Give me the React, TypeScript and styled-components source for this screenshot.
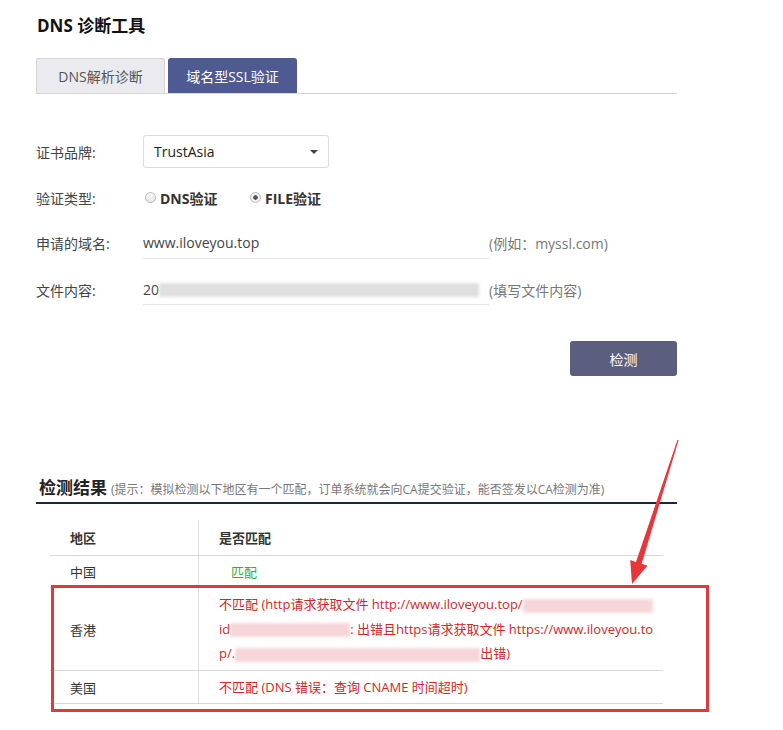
import styled, { createGlobalStyle } from 'styled-components'

const GlobalStyle = createGlobalStyle`
  html, body {
    margin: 0;
    background: #fff;
  }
  body {
    font-family: "Open Sans", "Noto Sans CJK SC", sans-serif;
    color: #333;
  }
`

const Page = styled.div`
  position: relative;
  width: 783px;
  height: 730px;
  padding: 12px 0 0 36px;
  box-sizing: border-box;
`

const Panel = styled.div`
  width: 641px;
`

const Title = styled.h1`
  margin: 0 0 18px 1px;
  font-size: 17px;
  font-weight: 700;
  color: #111;
  line-height: 28px;
`

const TabBar = styled.div`
  display: flex;
  gap: 3px;
  border-bottom: 1px solid #d6d6dc;
`

const Tab = styled.div<{ $active?: boolean }>`
  width: 129px;
  height: 35px;
  box-sizing: border-box;
  display: flex;
  align-items: center;
  justify-content: center;
  font-size: 14px;
  border-radius: 3px 3px 0 0;
  border: 1px solid ${p => (p.$active ? '#4e5a91' : '#d3d3da')};
  border-bottom: none;
  background: ${p => (p.$active ? '#4e5a91' : '#ebebef')};
  color: ${p => (p.$active ? '#fff' : '#555')};
`

const Form = styled.div`
  display: flex;
  flex-direction: column;
  margin-top: 41px;
`

const Row = styled.div<{ $h: number; $gap?: number }>`
  display: flex;
  align-items: center;
  height: ${p => p.$h}px;
  margin-top: ${p => p.$gap || 0}px;
`

const Label = styled.div`
  width: 107px;
  font-size: 14px;
  color: #444;
`

const Select = styled.div`
  width: 186px;
  height: 33px;
  box-sizing: border-box;
  border: 1px solid #dcdcdc;
  border-radius: 3px;
  display: flex;
  align-items: center;
  justify-content: space-between;
  padding: 0 10px 0 10px;
  font-size: 14px;
  color: #222;
`

const Caret = styled.span`
  width: 0;
  height: 0;
  border-left: 4px solid transparent;
  border-right: 4px solid transparent;
  border-top: 4px solid #444;
`

const Radio = styled.label`
  display: flex;
  align-items: center;
  gap: 4px;
  font-size: 14px;
  font-weight: 700;
  color: #333;
  margin-left: 2px;
  width: 103px;
`

const Dot = styled.span<{ $checked?: boolean }>`
  width: 11px;
  height: 11px;
  box-sizing: border-box;
  border-radius: 50%;
  border: 1px solid #b8b8b8;
  background: ${p =>
    p.$checked
      ? 'radial-gradient(circle, #555 0 2px, #f0f0f0 2.5px)'
      : 'linear-gradient(#fafafa, #e6e6e6)'};
`

const InputLine = styled.div`
  width: 346px;
  height: 100%;
  box-sizing: border-box;
  border-bottom: 1px solid #e3e3e3;
  display: flex;
  align-items: center;
  font-size: 14px;
  color: #444;
`

const Hint = styled.span`
  font-size: 14px;
  color: #777;
`

const Redact = styled.span<{ $w: number; $tint?: string }>`
  display: inline-block;
  width: ${p => p.$w}px;
  height: 14px;
  vertical-align: middle;
  background: ${p => p.$tint || '#dadada'};
  filter: blur(1.5px);
  opacity: 0.85;
`

const Actions = styled.div`
  display: flex;
  justify-content: flex-end;
  margin-top: 36px;
`

const Button = styled.button`
  width: 107px;
  height: 35px;
  border: none;
  border-radius: 3px;
  background: #5b5e7e;
  color: #fff;
  font-size: 14px;
  font-family: inherit;
`

const ResultHead = styled.div`
  margin-top: 98px;
  padding: 0 0 3px 3px;
  border-bottom: 2px solid #1c2548;
  display: flex;
  align-items: baseline;
  gap: 4px;
`

const ResultTitle = styled.span`
  font-size: 17px;
  font-weight: 700;
  color: #222;
`

const ResultTip = styled.span`
  font-size: 12px;
  color: #777;
`

const Table = styled.div`
  margin: 16px 0 0 14px;
  width: 613px;
`

const TRow = styled.div<{ $h: number; $border?: boolean }>`
  display: grid;
  grid-template-columns: 148px 1fr;
  min-height: ${p => p.$h}px;
  border-bottom: ${p => (p.$border ? '1px solid #d8d8d8' : 'none')};
`

const Cell = styled.div<{ $head?: boolean }>`
  display: flex;
  flex-direction: column;
  justify-content: center;
  padding-left: 20px;
  font-size: 13px;
  font-weight: ${p => (p.$head ? 700 : 400)};
  color: #333;
  & + & {
    border-left: 1px solid #dedede;
  }
`

const Match = styled.span`
  color: #2fae3c;
  padding-left: 12px;
`

const Bad = styled.div`
  color: #d3262a;
  line-height: 24.5px;
  white-space: nowrap;
`

const Highlight = styled.div`
  position: absolute;
  left: 51px;
  top: 585px;
  width: 658px;
  height: 127px;
  box-sizing: border-box;
  border: 3px solid #da3b3d;
  pointer-events: none;
`

const Arrow = styled.svg`
  position: absolute;
  left: 0;
  top: 0;
  pointer-events: none;
`

export default function App() {
  return (
    <Page>
      <GlobalStyle />
      <Panel>
        <Title>DNS 诊断工具</Title>
        <TabBar>
          <Tab>DNS解析诊断</Tab>
          <Tab $active>域名型SSL验证</Tab>
        </TabBar>

        <Form>
          <Row $h={33}>
            <Label>证书品牌:</Label>
            <Select>
              TrustAsia
              <Caret />
            </Select>
          </Row>
          <Row $h={59}>
            <Label>验证类型:</Label>
            <Radio>
              <Dot /> DNS验证
            </Radio>
            <Radio>
              <Dot $checked /> FILE验证
            </Radio>
          </Row>
          <Row $h={32}>
            <Label>申请的域名:</Label>
            <InputLine>www.iloveyou.top</InputLine>
            <Hint>(例如：myssl.com)</Hint>
          </Row>
          <Row $h={30} $gap={16}>
            <Label>文件内容:</Label>
            <InputLine>
              <span>20</span>
              <Redact $w={320} />
            </InputLine>
            <Hint>(填写文件内容)</Hint>
          </Row>
        </Form>

        <Actions>
          <Button>检测</Button>
        </Actions>

        <ResultHead>
          <ResultTitle>检测结果</ResultTitle>
          <ResultTip>
            (提示：模拟检测以下地区有一个匹配，订单系统就会向CA提交验证，能否签发以CA检测为准)
          </ResultTip>
        </ResultHead>

        <Table>
          <TRow $h={35} $border>
            <Cell $head>地区</Cell>
            <Cell $head>是否匹配</Cell>
          </TRow>
          <TRow $h={31} $border>
            <Cell>中国</Cell>
            <Cell>
              <Match>匹配</Match>
            </Cell>
          </TRow>
          <TRow $h={82} $border>
            <Cell>香港</Cell>
            <Cell>
              <Bad>
                不匹配 (http请求获取文件 http://www.iloveyou.top/
                <Redact $w={130} $tint="#f6d0d3" />
              </Bad>
              <Bad>
                id
                <Redact $w={120} $tint="#f6d0d3" />
                : 出错且https请求获取文件 https://www.iloveyou.to
              </Bad>
              <Bad>
                p/.
                <Redact $w={245} $tint="#f6d0d3" />
                出错)
              </Bad>
            </Cell>
          </TRow>
          <TRow $h={32} $border>
            <Cell>美国</Cell>
            <Cell>
              <Bad>不匹配 (DNS 错误：查询 CNAME 时间超时)</Bad>
            </Cell>
          </TRow>
        </Table>
      </Panel>

      <Highlight />
      <Arrow width="783" height="730" viewBox="0 0 783 730">
        <polygon
          points="678.6,440 677.4,440 636,562 630.2,560.1 632,584 647.4,565.7 641.7,563.8"
          fill="#e8363a"
        />
      </Arrow>
    </Page>
  )
}
